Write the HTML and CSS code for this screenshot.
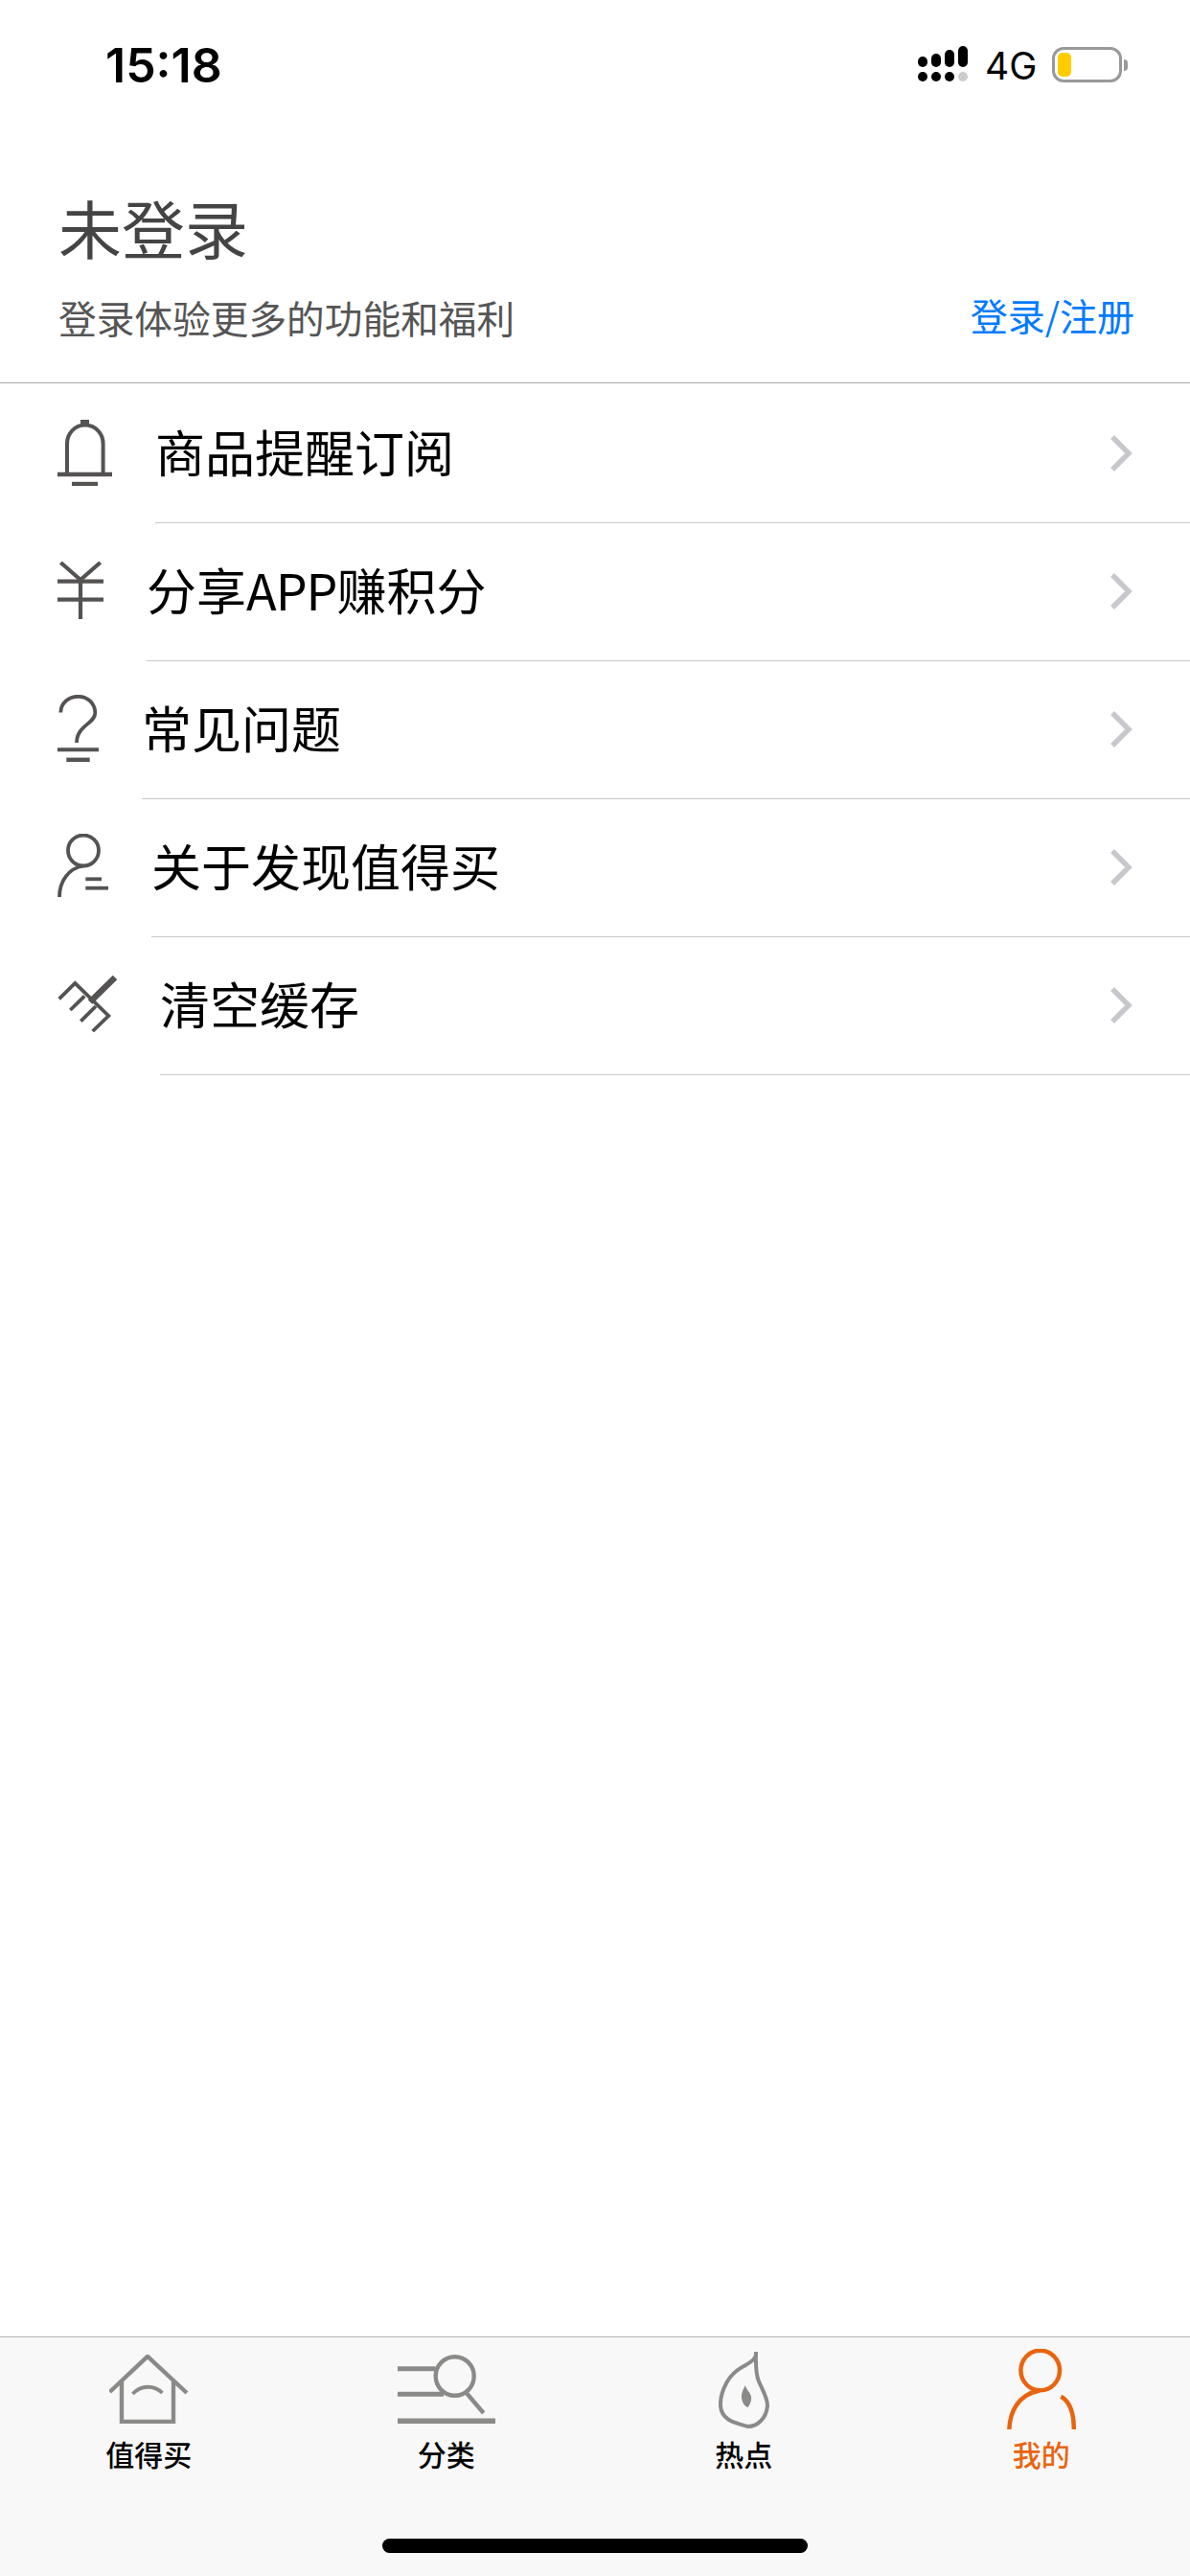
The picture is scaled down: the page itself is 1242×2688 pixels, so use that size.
FILE: index.html
```html
<!DOCTYPE html>
<html lang="zh-CN">
<head>
<meta charset="utf-8">
<title>我的</title>
<link rel="stylesheet" href="styles.css">
</head>
<body>
<div class="page">
  <header class="status">
    <span class="time">15:18</span>
    <div class="status-right">
      <div class="signal">
        <span class="sig s1"></span><span class="sig s2"></span><span class="sig s3"></span><span class="sig s4"></span>
      </div>
      <span class="net">4G</span>
      <div class="battery"><div class="battery-body"><span class="battery-fill"></span></div><span class="battery-tip"></span></div>
    </div>
  </header>

  <section class="account">
    <div class="account-text">
      <h1 class="account-title">未登录</h1>
      <p class="account-sub">登录体验更多的功能和福利</p>
    </div>
    <a class="account-link">登录/注册</a>
  </section>

  <ul class="menu">
    <li class="row">
      <svg class="ico" width="57" height="69" viewBox="0 0 57 69" fill="none" stroke="#555252" stroke-width="4"><path d="M10 57V25A18.8 19.5 0 0 1 47.6 25V57"/><path d="M0 57H57" stroke-width="4.4"/><path d="M15 67H42" stroke-width="4.4"/><path d="M24 2.5H33" stroke-width="5"/></svg>
      <div class="row-body"><span class="row-text">商品提醒订阅</span><svg class="chev" width="24" height="40" viewBox="0 0 24 40" fill="none" stroke="#c8c8cc" stroke-width="5.5"><path d="M3 3L20 20L3 37"/></svg></div>
    </li>
    <li class="row">
      <svg class="ico" width="48" height="60" viewBox="0 0 48 60" fill="none" stroke="#555252" stroke-width="4.2"><path d="M3.3 1L24 19L44.7 1"/><path d="M24 19V60"/><path d="M0 20.7H48"/><path d="M0 39.7H48"/></svg>
      <div class="row-body"><span class="row-text">分享<span class="latin">APP</span>赚积分</span><svg class="chev" width="24" height="40" viewBox="0 0 24 40" fill="none" stroke="#c8c8cc" stroke-width="5.5"><path d="M3 3L20 20L3 37"/></svg></div>
    </li>
    <li class="row">
      <svg class="ico" width="43" height="70" viewBox="0 0 43 70" fill="none" stroke="#555252" stroke-width="3.8"><path d="M3.3 18.5C3.6 8 12 1.800 21.7 1.800C31.500 1.800 39.300 9 39.300 19C39.300 30 20 32 20 50"/><path d="M0 57.300H43" stroke-width="4"/><path d="M9.300 67.800H33.700" stroke-width="4.400"/></svg>
      <div class="row-body"><span class="row-text">常见问题</span><svg class="chev" width="24" height="40" viewBox="0 0 24 40" fill="none" stroke="#c8c8cc" stroke-width="5.5"><path d="M3 3L20 20L3 37"/></svg></div>
    </li>
    <li class="row">
      <svg class="ico ico-up" width="53" height="66" viewBox="0 0 53 66" fill="none" stroke="#555252" stroke-width="3.8"><circle cx="27" cy="17.500" r="16"/><path d="M2 66C2 49 12 36 27 33.500"/><path d="M29.300 47.300H46"/><path d="M29.300 56.700H53.300"/></svg>
      <div class="row-body"><span class="row-text">关于发现值得买</span><svg class="chev" width="24" height="40" viewBox="0 0 24 40" fill="none" stroke="#c8c8cc" stroke-width="5.5"><path d="M3 3L20 20L3 37"/></svg></div>
    </li>
    <li class="row">
      <svg class="ico ico-up" width="62" height="60" viewBox="0 0 62 60" fill="none" stroke="#555252" stroke-width="3.8"><path d="M1.700 25.300L18.300 9L53.300 43L36.700 59"/><path d="M28.300 22.300L13.300 37"/><path d="M40 33L24.300 48.700"/><path d="M60 3L34 28.500" stroke-width="6.500"/></svg>
      <div class="row-body"><span class="row-text">清空缓存</span><svg class="chev" width="24" height="40" viewBox="0 0 24 40" fill="none" stroke="#c8c8cc" stroke-width="5.5"><path d="M3 3L20 20L3 37"/></svg></div>
    </li>
  </ul>

  <div class="spacer"></div>

  <nav class="tabbar">
    <div class="tabs">
      <div class="tab">
        <div class="tab-ico"><svg width="83" height="72" viewBox="0 0 83 72" fill="none" stroke="#8a8a88" stroke-width="4.400"><path d="M0.500 39L40 1.800L81 40"/><path d="M13 28V70H67V28"/><path d="M24.500 41C33 31.500 47 31.500 55.400 40" stroke-width="3.800"/></svg></div>
        <span class="tab-label">值得买</span>
      </div>
      <div class="tab">
        <div class="tab-ico"><svg width="102" height="72" viewBox="0 0 102 72" fill="none" stroke="#8a8a88" stroke-width="4.400"><ellipse cx="59.700" cy="22.500" rx="20" ry="20.300"/><path d="M0 14.700H39.500" stroke-width="5"/><path d="M0 41.300H48" stroke-width="5"/><path d="M0 69.200H102" stroke-width="5.400"/><path d="M72 40.300L89.700 61"/></svg></div>
        <span class="tab-label">分类</span>
      </div>
      <div class="tab">
        <div class="tab-ico"><svg width="53" height="82" viewBox="0 0 53 82" fill="none" stroke="#8a8a88" stroke-width="4"><path d="M39 5C38 11 33 12.500 29 15.500C21 20 14 24 8.500 34C4 42 2 50 1.900 57C2 64 5 69 10 72.500C15 76 24 78 30.700 80C40 80 50 72 51 58C51 50 46 42 42 33C38 24 39 12 39 2Z"/><path d="M28 37C25 42 23.600 46 24 50C24.500 55 27 59 30.700 60C33.500 56 34.500 52 34 49C33 44 29 42 28 37Z" fill="#8a8a88" stroke="none"/></svg></div>
        <span class="tab-label">热点</span>
      </div>
      <div class="tab tab-active">
        <div class="tab-ico"><svg width="72" height="84" viewBox="0 0 72 84" fill="none" stroke="#e9640f" stroke-width="4.500"><ellipse cx="34.700" cy="22.500" rx="20.300" ry="20.800"/><path d="M2.300 84C3 66 11 48 34 43.500"/><path d="M56.300 49.700C66 55 69.800 66 69.800 84"/></svg></div>
        <span class="tab-label">我的</span>
      </div>
    </div>
    <div class="home-bar"></div>
  </nav>
</div>
</body>
</html>
```

FILE: styles.css
```css
* { box-sizing: border-box; }
html, body { margin: 0; padding: 0; background: #fff; }
body { font-family: "Noto Sans CJK SC", "Inter", sans-serif; color: #000; }
.page { width: 1242px; height: 2688px; display: flex; flex-direction: column; overflow: hidden; }

.status { height: 134px; display: flex; justify-content: space-between; align-items: flex-start; padding: 40px 65px 0 110px; flex: none; }
.time { font-family: "Inter", sans-serif; font-size: 50px; font-weight: 600; line-height: 56px; }
.status-right { display: flex; align-items: flex-start; }
.signal { display: flex; gap: 4px; margin-top: 8px; width: 52px; height: 37px; align-items: flex-end; margin-right: 18px; }
.sig { width: 10px; display: block; background: #000; border-radius: 5px; position: relative; }
.sig::after { content: ""; position: absolute; left: 0; right: 0; bottom: -15px; height: 10px; border-radius: 5px; background: #000; }
.s1 { height: 11px; margin-bottom: 15px; }
.s2 { height: 14px; margin-bottom: 15px; }
.s3 { height: 18px; margin-bottom: 15px; }
.s4 { height: 22px; margin-bottom: 15px; }
.s4::after { background: #ccc; }
.net { font-family: "Inter", sans-serif; font-size: 39px; line-height: 46px; margin-top: 6px; width: 70px; }
.battery { display: flex; align-items: center; height: 37px; margin-top: 9px; }
.battery-body { width: 73px; height: 37px; border: 3.5px solid #999; border-radius: 12px; padding: 3px; }
.battery-fill { display: block; width: 14px; height: 100%; background: #fc0; border-radius: 5px; }
.battery-tip { width: 4px; height: 12px; background: #999; border-radius: 0 6px 6px 0; margin-left: 2px; }

.account { height: 266px; flex: none; display: flex; justify-content: space-between; align-items: flex-start; padding: 0 58px 0 61px; border-bottom: 1px solid #aaa; }
.account-text { display: flex; flex-direction: column; }
.account-title { margin: 62px 0 0; font-size: 66px; font-weight: 400; line-height: 80px; color: #444; }
.account-sub { margin: 30px 0 0; font-size: 39.700px; line-height: 50px; color: #555; }
.account-link { margin-top: 169px; font-size: 39px; line-height: 50px; color: #007aff; }

.menu { list-style: none; margin: 0; padding: 2px 0 0; flex: none; }
.row { display: flex; align-items: center; gap: 45px; padding-left: 60px; height: 144px; }
.ico { flex: none; display: block; margin-bottom: 4px; }
.ico-up { margin-bottom: 7px; }
.row-body { flex: 1; height: 100%; display: flex; align-items: center; justify-content: space-between; border-bottom: 1px solid #c8c8c8; padding: 0 60px 2px 0; }
.row-text { font-size: 52px; line-height: 60px; margin-bottom: 3px; }
.latin { letter-spacing: -1px; }
.chev { flex: none; display: block; }

.spacer { flex: 1; }

.tabbar { height: 250px; flex: none; background: #f8f8f8; border-top: 1px solid #b4b4b4; display: flex; flex-direction: column; align-items: center; }
.tabs { display: grid; grid-template-columns: repeat(4, 1fr); width: 100%; }
.tab { display: flex; flex-direction: column; align-items: center; }
.tab-ico { height: 86px; margin-top: 11px; display: flex; align-items: center; justify-content: center; }
.tab-ico svg { display: block; }
.tab-label { font-size: 30px; line-height: 40px; margin-top: 4px; font-weight: 500; }
.tab-active .tab-label { color: #e9640f; }
.home-bar { width: 444px; height: 15px; border-radius: 8px; background: #000; margin-top: 69px; }
```
